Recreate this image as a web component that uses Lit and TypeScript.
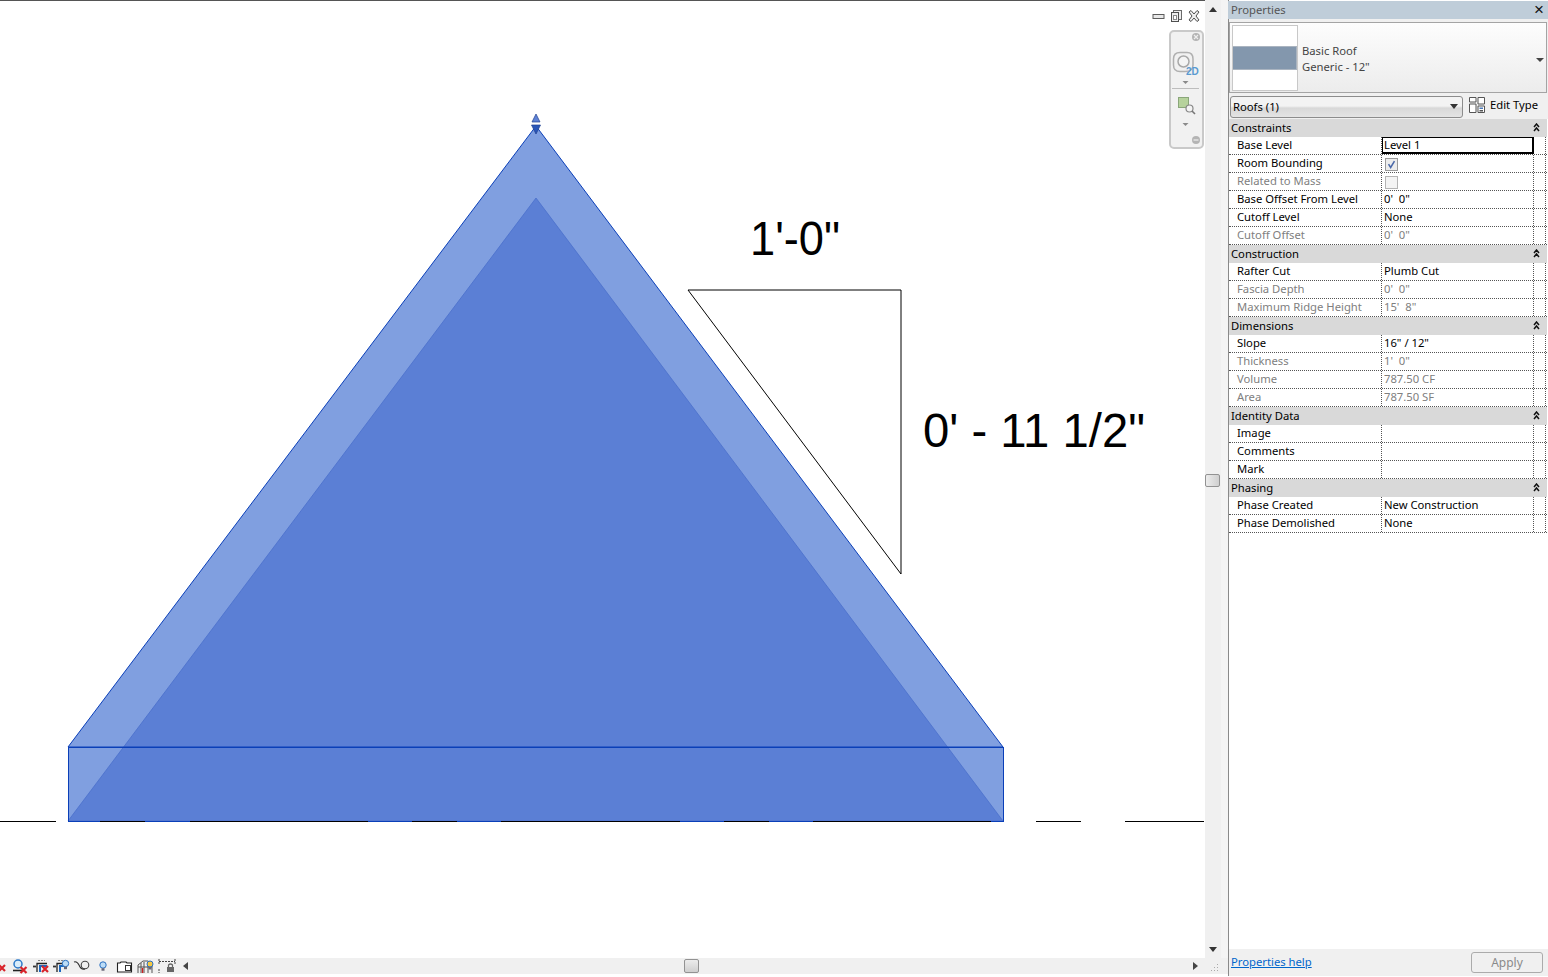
import { LitElement, html, css, svg } from "lit";
import { customElement } from "lit/decorators.js";

type Row = { label: string; value?: string; off?: boolean; check?: "on" | "off"; input?: boolean };
type Section = { title: string; rows: Row[] };

const sections: Section[] = [
  { title: "Constraints", rows: [
    { label: "Base Level", value: "Level 1", input: true },
    { label: "Room Bounding", check: "on" },
    { label: "Related to Mass", check: "off", off: true },
    { label: "Base Offset From Level", value: "0'  0\"" },
    { label: "Cutoff Level", value: "None" },
    { label: "Cutoff Offset", value: "0'  0\"", off: true },
  ]},
  { title: "Construction", rows: [
    { label: "Rafter Cut", value: "Plumb Cut" },
    { label: "Fascia Depth", value: "0'  0\"", off: true },
    { label: "Maximum Ridge Height", value: "15'  8\"", off: true },
  ]},
  { title: "Dimensions", rows: [
    { label: "Slope", value: "16\" / 12\"" },
    { label: "Thickness", value: "1'  0\"", off: true },
    { label: "Volume", value: "787.50 CF", off: true },
    { label: "Area", value: "787.50 SF", off: true },
  ]},
  { title: "Identity Data", rows: [
    { label: "Image" }, { label: "Comments" }, { label: "Mark" },
  ]},
  { title: "Phasing", rows: [
    { label: "Phase Created", value: "New Construction" },
    { label: "Phase Demolished", value: "None" },
  ]},
];

const groundBlack: [number, number][] = [
  [0, 56], [100, 145], [190, 368], [412, 457], [501, 680], [724, 769], [813, 991], [1036, 1081], [1125, 1204],
];

@customElement("app-root")
export class AppRoot extends LitElement {
  static styles = css`
    :host { display: block; width: 1548px; height: 977px; overflow: hidden; background: #fff;
      font-family: "Noto Sans", "Open Sans", sans-serif; font-size: 11.25px; color: #000; }
    .app { display: flex; width: 1548px; height: 977px; }
    .left { width: 1228px; flex: none; display: flex; flex-direction: column; }
    .top { height: 958px; display: flex; flex: none; }
    .canvas { width: 1205px; flex: none; position: relative; overflow: hidden; }
    .canvas > svg.drawing { display: block; }
    .dim { font-family: "Liberation Sans", Arial, sans-serif; font-size: 48px; fill: #000; }
    .vbar { width: 16px; flex: none; background: #f0f0f0; display: flex; flex-direction: column;
      align-items: center; justify-content: space-between; position: relative; padding: 7px 0 6px; box-sizing: border-box; }
    .gutter { flex: 1; background: #f4f4f4; }
    .arrow-u { width: 0; height: 0; border: 4px solid transparent; border-top: 0; border-bottom: 5px solid #333; }
    .arrow-d { width: 0; height: 0; border: 4px solid transparent; border-bottom: 0; border-top: 5px solid #333; }
    .arrow-l { width: 0; height: 0; border: 4px solid transparent; border-left: 0; border-right: 5px solid #444; }
    .arrow-r { width: 0; height: 0; border: 4px solid transparent; border-right: 0; border-left: 5px solid #444; }
    .thumb-v { position: absolute; top: 474px; left: 0; width: 15px; height: 13px; background: linear-gradient(90deg,#ececec,#cfcfcf);
      border: 1px solid #929292; border-radius: 2px; box-sizing: border-box; }
    .bottom { height: 16px; display: flex; flex: none; background: #f0f0f0; }
    .status { width: 178px; flex: none; display: block; }
    .hbar { width: 1027px; flex: none; position: relative; display: flex; align-items: center;
      justify-content: space-between; padding: 0 7px 0 5px; box-sizing: border-box; }
    .thumb-h { position: absolute; left: 506px; top: 1px; width: 15px; height: 14px; background: linear-gradient(#ececec,#cfcfcf);
      border: 1px solid #929292; border-radius: 2px; box-sizing: border-box; }
    .grip { flex: 1; display: block; }
    .winbtns { position: absolute; left: 1152px; top: 9px; display: flex; gap: 6px; align-items: center; }
    .nav { position: absolute; left: 1169px; top: 30px; width: 35px; height: 119px; box-sizing: border-box;
      border: 2px solid #c9c9c9; border-radius: 5px; background: #f1f1f1; }

    .panel { flex: 1; display: flex; flex-direction: column; height: 976px; border-left: 1px solid #8a8a8a; background: #fff; min-width: 0; }
    .title { height: 18px; margin-top: 1px; background: #bfcdd9; color: #555; display: flex; align-items: center;
      justify-content: space-between; padding: 0 3px 0 3px; flex: none; line-height: 16px; margin-left: -1px; }
    .close { font-size: 17px; color: #111; line-height: 16px; font-family: "Liberation Sans", sans-serif; padding-right: 1px; }
    .head { background: #f0f0f0; height: 100px; flex: none; box-sizing: border-box; padding-top: 3px; width: 100%; }
    .typebox { margin-right: 1px; height: 71px; box-sizing: border-box; border: 1px solid #a4a4a4;
      background: linear-gradient(#fdfdfd, #ececec); display: flex; align-items: center; padding-left: 2px; position: relative; }
    .preview { width: 66px; height: 66px; box-sizing: border-box; border: 1px solid #c8c8c8; background: #fff; display: flex; align-items: center; flex: none; }
    .band { width: 100%; height: 24px; background: #8397ad; border: 1px solid #aab4c0; box-sizing: border-box; border-left: 0; }
    .typetext { margin-left: 4px; color: #444; line-height: 16px; padding-top: 3px; }
    .typearrow { position: absolute; right: 2px; top: 35px; border: 4px solid transparent; border-bottom: 0; border-top: 4px solid #444; }
    .filter { display: flex; align-items: center; margin-top: 2px; height: 23px; padding-left: 1px; }
    .select { width: 233px; height: 22px; box-sizing: border-box; border: 1px solid #8c8c8c; border-radius: 3px;
      background: linear-gradient(#f3f3f3 45%, #d8d8d8 55%, #e4e4e4); display: flex; align-items: center; justify-content: space-between;
      padding: 0 4px 0 2px; }
    .edit { display: flex; align-items: center; margin-left: 6px; gap: 5px; margin-top: -4px; }
    .edit svg { display: block; }
    .sec { height: 18px; background: #d9d9d9; display: flex; align-items: center; justify-content: space-between;
      padding: 0 7px 1px 2px; box-sizing: border-box; line-height: 16px; margin-right: 1px; }
    .sec svg { display: block; }
    .row { height: 18px; box-sizing: border-box; display: grid; grid-template-columns: 153px 152px 12px; border-bottom: 1px dotted #555;
      line-height: 15px; color: #000; margin-right: 1px; }
    .row.off { color: #808080; }
    .lab { padding-left: 8px; border-right: 1px dotted #555; white-space: nowrap; }
    .val { padding-left: 2px; border-right: 1px dotted #555; white-space: pre; display: flex; align-items: flex-start; }
    .end { border-right: 1px dotted #555; }
    .val.input { border: 1px solid #000; border-width: 1px 2px 2px 1px; padding-left: 1px; background: #fff; line-height: 13px; }
    .check { width: 13px; height: 13px; box-sizing: border-box; border: 1px solid #9a9a9a; background: #ececec; margin: 3px 0 0 1px; display: block; }
    .check.blank { background: #f4f4f4; border-color: #b4b4b4; }
    .fill { flex: 1; background: #fff; }
    .foot { height: 27px; flex: none; background: #f0f0f0; display: flex; align-items: center; justify-content: space-between; padding: 0 5px 0 2px; }
    .foot a { color: #0066cc; text-decoration: underline; padding-bottom: 2px; }
    .apply { width: 72px; height: 21px; box-sizing: border-box; border: 1px solid #ababab; border-radius: 3px; display: flex; align-items: center;
      justify-content: center; color: #8a8a8a; background: #f0f0f0; padding-top: 1px; margin-bottom: 1px; font-size: 12px; }
  `;

  private drawing() {
    const blue = "#0a3fb8";
    return html`<svg class="drawing" width="1205" height="958" viewBox="0 0 1205 958" shape-rendering="crispEdges">
      <rect x="0" y="0" width="1205" height="1" fill="#555"></rect>
      <g shape-rendering="auto">
        <polygon points="536,126 68,747 68,821 1003,821 1003,747" fill="#809fe0"></polygon>
        <polygon points="536,198 68,821 1003,821" fill="#5b7fd5" stroke="#4a70cb" stroke-width="0.8"></polygon>
        <polygon points="536,126 68,747 1003,747" fill="none" stroke=${blue} stroke-width="1"></polygon>
        <polygon points="536,114 540,122 532,122" fill="#5f82d6" stroke="#1f3f8f" stroke-width="0.7"></polygon>
        <polygon points="536,134 540.5,125 531.5,125" fill="#2a56b8" stroke="#1f3f8f" stroke-width="0.7"></polygon>
      </g>
      <rect x="68.5" y="747.5" width="935" height="74" fill="none" stroke=${blue} stroke-width="1"></rect>
      ${groundBlack.map(([a, b]) => svg`<rect x=${a} y="821" width=${b - a} height="1" fill="#000"></rect>`)}
      <polygon points="688,290 901,290 901,574" fill="#fff" stroke="#000" stroke-width="1" shape-rendering="auto"></polygon>
      <text class="dim" x="750" y="255" textLength="90" lengthAdjust="spacingAndGlyphs" shape-rendering="auto">1'-0"</text>
      <text class="dim" x="923" y="447" textLength="222" lengthAdjust="spacingAndGlyphs" shape-rendering="auto">0' - 11 1/2"</text>
    </svg>`;
  }

  private winBtns() {
    return html`<div class="winbtns">
      <svg width="13" height="14" viewBox="0 0 13 14"><rect x="1" y="5.5" width="11" height="4" fill="#e8e8e8" stroke="#5c5c5c"></rect></svg>
      <svg width="11" height="14" viewBox="0 0 11 14"><rect x="2.5" y="1.5" width="8" height="9" fill="#eee" stroke="#6a6a6a"></rect><rect x="0.5" y="3.5" width="7" height="9" fill="#eee" stroke="#4f4f4f"></rect><rect x="2.5" y="6.5" width="3" height="4" fill="#fff" stroke="#888"></rect></svg>
      <svg width="12" height="14" viewBox="0 0 12 14"><path d="M1 3 L3 1.5 L6 5 L9 1.5 L11 3 L8 7 L11 11 L9 12.5 L6 9 L3 12.5 L1 11 L4 7 Z" fill="#eee" stroke="#4f4f4f" stroke-width="1"></path></svg>
    </div>`;
  }

  private nav() {
    return html`<div class="nav"><svg width="31" height="115" viewBox="0 0 31 115">
      <circle cx="25" cy="5" r="4" fill="#b4b4b4"></circle>
      <path d="M23 3 L27 7 M27 3 L23 7" stroke="#eee" stroke-width="1.2"></path>
      <path d="M9 20.5 H16 Q22 20.5 22 27 V33 Q22 39.5 14 39.5 H9 Q2.5 39.5 2.5 33 V27 Q2.5 20.5 9 20.5 Z" fill="none" stroke="#b0b0b0" stroke-width="1.5"></path>
      <circle cx="12.5" cy="29.5" r="5.5" fill="#f4f4f4" stroke="#a8a8a8" stroke-width="1.5"></circle>
      <text x="15" y="42.5" font-family="Liberation Sans, sans-serif" font-weight="700" font-size="10" fill="#5a9ad0">2D</text>
      <polygon points="11.5,49 17.5,49 14.5,52" fill="#8a8a8a"></polygon>
      <rect x="1" y="56" width="27" height="1" fill="#bdbdbd"></rect>
      <rect x="7.5" y="65.5" width="10" height="10" fill="#b6d29c" stroke="#8aa67a"></rect>
      <circle cx="18.5" cy="76.5" r="3.5" fill="#f4f4f4" stroke="#888" stroke-width="1.2"></circle>
      <path d="M21 79 L24 82" stroke="#777" stroke-width="1.6"></path>
      <polygon points="11.5,91 17.5,91 14.5,94" fill="#8a8a8a"></polygon>
      <circle cx="25" cy="108" r="4" fill="#b4b4b4"></circle>
      <rect x="22.5" y="107.4" width="5" height="1.2" fill="#eee"></rect>
    </svg></div>`;
  }

  private status() {
    const x = (cx: number, cy: number) => svg`<path d="M${cx - 3} ${cy - 3} L${cx + 3} ${cy + 3} M${cx + 3} ${cy - 3} L${cx - 3} ${cy + 3}" stroke="#d8232a" stroke-width="2.2"></path>`;
    const bulb = (cx: number, cy: number, c = "#bcdcf6", r = 3.2) => svg`<circle cx=${cx} cy=${cy} r=${r} fill=${c} stroke="#2a6fc0" stroke-width="1"></circle><rect x=${cx - 1.5} y=${cy + r} width="3" height="2.5" fill="#667"></rect>`;
    const bracket = (o: number) => svg`
      <path d="M${o} 8.5 H${o + 3}" stroke="#333" stroke-width="1.8"></path>
      <path d="M${o + 5} 2.5 H${o + 12}" stroke="#888" stroke-width="1" stroke-dasharray="2 1"></path>
      <path d="M${o + 4} 14 V5.5 H${o + 14}" stroke="#222" stroke-width="1.3" fill="none"></path>
      <path d="M${o + 7} 14 V8 H${o + 14}" stroke="#1c68c0" stroke-width="2" fill="none"></path>`;
    return html`<svg class="status" width="178" height="16" viewBox="0 0 178 16">
      ${x(2, 10)}
      <circle cx="18" cy="6" r="4" fill="#d8ecfa" stroke="#2a78c8" stroke-width="1.5"></circle>
      <path d="M13 12.5 H22" stroke="#222" stroke-width="1.6"></path>
      ${x(23.5, 12)}
      ${bracket(33)}
      ${x(45, 11)}
      ${bracket(53)}
      ${bulb(65.5, 5.5)}
      <path d="M74 4 Q77 3 79 7 Q81 12 85 11" stroke="#333" stroke-width="1.1" fill="none"></path>
      <circle cx="85" cy="7" r="3.8" fill="none" stroke="#444" stroke-width="1.1"></circle>
      ${bulb(103, 7)}
      <path d="M117.5 5 H120 L121 4 H126 L127 5 H131.5 V14 H117.5 Z" fill="#fff" stroke="#222" stroke-width="1.1"></path>
      <rect x="125.5" y="7.5" width="5" height="5" fill="#fff" stroke="#333"></rect>
      <path d="M138 15 V7 L143 3 H148 L152 6 V15 M141 5 V15 M144 4 V15 M148 4 V15 M138 9 H152" stroke="#555" stroke-width="1" fill="none"></path>
      <path d="M142.5 10 V15" stroke="#c22" stroke-width="1.4"></path>
      ${bulb(150, 6, "#f5c842", 3)}
      <path d="M159 1 V6 M175 1 V6 M159 3.5 H175 M159 11 V15" stroke="#444" stroke-width="1" stroke-dasharray="2 1" fill="none"></path>
      <rect x="167" y="9" width="7" height="5" fill="#666"></rect>
      <path d="M168.5 9 V7 Q170.5 5 172.5 7 V9" stroke="#666" fill="none" stroke-width="1.2"></path>
    </svg>`;
  }

  private chevrons() {
    return html`<svg width="7" height="9" viewBox="0 0 7 9"><path d="M1 4 L3.5 1 L6 4 M1 8 L3.5 5 L6 8" fill="none" stroke="#111" stroke-width="1.5"></path></svg>`;
  }

  private renderRow(r: Row) {
    let v;
    if (r.check) {
      v = html`<div class="val">
        <svg class="check ${r.check === "on" ? "" : "blank"}" width="13" height="13" viewBox="0 0 13 13">
          ${r.check === "on" ? svg`<path d="M3 6 L5.5 10 L10 2.5" fill="none" stroke="#4a68a8" stroke-width="1.8"></path>` : ""}
        </svg></div>`;
    } else {
      const cls = `val${r.input ? " input" : ""}`;
      v = html`<div class=${cls}>${r.value ?? ""}</div>`;
    }
    return html`<div class="row ${r.off ? "off" : ""}"><div class="lab">${r.label}</div>${v}<div class="end"></div></div>`;
  }

  render() {
    return html`<div class="app">
      <div class="left">
        <div class="top">
          <div class="canvas">${this.drawing()}${this.winBtns()}${this.nav()}</div>
          <div class="vbar"><div class="arrow-u"></div><div class="thumb-v"></div><div class="arrow-d"></div></div>
          <div class="gutter"></div>
        </div>
        <div class="bottom">
          ${this.status()}
          <div class="hbar"><div class="arrow-l"></div><div class="thumb-h"></div><div class="arrow-r"></div></div>
          <svg class="grip" height="16" viewBox="0 0 23 16"><g fill="#aaa"><rect x="12" y="12" width="1" height="1"></rect><rect x="9" y="12" width="1" height="1"></rect><rect x="6" y="12" width="1" height="1"></rect><rect x="12" y="9" width="1" height="1"></rect><rect x="9" y="9" width="1" height="1"></rect><rect x="12" y="6" width="1" height="1"></rect></g></svg>
        </div>
      </div>
      <div class="panel">
        <div class="title"><span>Properties</span><span class="close">×</span></div>
        <div class="head">
          <div class="typebox">
            <div class="preview"><div class="band"></div></div>
            <div class="typetext">Basic Roof<br />Generic - 12"</div>
            <div class="typearrow"></div>
          </div>
          <div class="filter">
            <div class="select"><span>Roofs (1)</span><div class="arrow-d"></div></div>
            <div class="edit">
              <svg width="16" height="16" viewBox="0 0 16 16"><path d="M.5.5H7V5H.5ZM.5 7H7V15.5H.5ZM9 .5H15.5V7H9ZM9 9H15.5V15.5H9Z" fill="#fff" stroke="#555"></path><rect x="10.5" y="10.5" width="3.5" height="1.5" fill="#4a78b8"></rect><rect x="10.5" y="13" width="3.5" height="1.5" fill="#555"></rect></svg>
              <span>Edit Type</span>
            </div>
          </div>
        </div>
        ${sections.map((s) => html`<div class="sec"><span>${s.title}</span>${this.chevrons()}</div>${s.rows.map((r) => this.renderRow(r))}`)}
        <div class="fill"></div>
        <div class="foot"><a href="#">Properties help</a><div class="apply">Apply</div></div>
      </div>
    </div>`;
  }
}
